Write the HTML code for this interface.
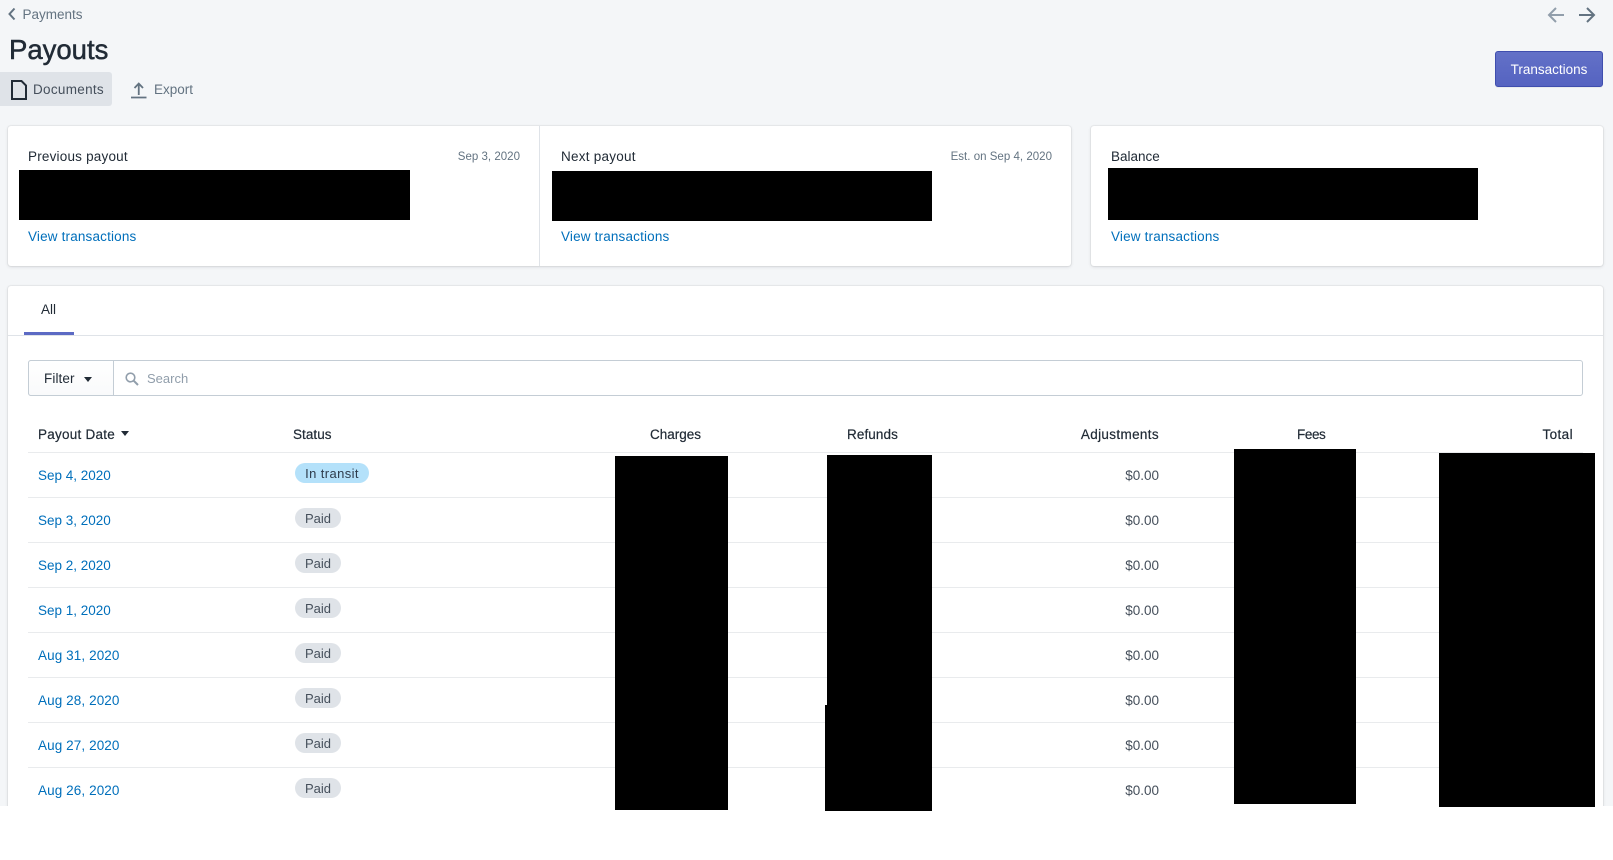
<!DOCTYPE html>
<html><head><meta charset="utf-8"><title>Payouts</title>
<style>
html,body{margin:0;padding:0;width:1613px;height:860px;overflow:hidden;background:#fff}
body{position:relative;font-family:"Liberation Sans",sans-serif;font-size:13.5px;color:#212b36}
#bg{position:absolute;left:0;top:0;width:1613px;height:806px;background:#f4f6f8}
.a{position:absolute}
.t{position:absolute;white-space:nowrap;line-height:20px}
.card{position:absolute;background:#fff;border-radius:3px;box-shadow:0 0 0 1px rgba(63,63,68,.05),0 1px 3px 0 rgba(63,63,68,.15)}
.k{position:absolute;background:#000}
.l{color:#006fbb}
.g{color:#637381}
.v{letter-spacing:.17px}
.s{font-size:11.5px;letter-spacing:.02px}
.h{-webkit-text-stroke:.2px #212b36}
.line{position:absolute;left:28px;width:1555px;height:1px;background:#e9ebed}
.pill{position:absolute;left:295px;width:46px;height:20px;border-radius:10px;background:#dfe3e8;color:#454f5b;line-height:21px;text-align:center;font-size:13px}
</style></head><body>
<div id="bg"></div>

<svg class="a" style="left:7px;top:7px" width="10" height="14" viewBox="0 0 10 14"><path d="M7.500 1.500 2.500 7l5 5.500" fill="none" stroke="#637381" stroke-width="2"/></svg>
<div class="t g" style="left:22.500px;top:5px">Payments</div>
<div class="t" style="left:9px;top:34px;font-size:27.500px;line-height:32px;-webkit-text-stroke:.5px #212b36">Payouts</div>

<div class="a" style="left:0;top:72px;width:112px;height:34px;background:#dfe3e8;border-radius:0 3px 3px 0"></div>
<svg class="a" style="left:10px;top:79px" width="18" height="22" viewBox="0 0 18 22"><path d="M2 2h9.500L16 6.500V20H2z" fill="none" stroke="#212b36" stroke-width="2"/></svg>
<div class="t" style="left:33px;top:80px;color:#454f5b;letter-spacing:.3px">Documents</div>
<svg class="a" style="left:130px;top:81px" width="18" height="18" viewBox="0 0 18 18"><path d="M1 16.500h15.500M8.750 14V3M4.500 7l4.250-4.500L13 7" fill="none" stroke="#637381" stroke-width="1.800"/></svg>
<div class="t g" style="left:154px;top:80px">Export</div>

<svg class="a" style="left:1547px;top:6px" width="18" height="18" viewBox="0 0 18 18"><path d="M17 9H2M9 2 2 9l7 7" fill="none" stroke="#919eab" stroke-width="2"/></svg>
<svg class="a" style="left:1578px;top:6px" width="18" height="18" viewBox="0 0 18 18"><path d="M1 9h15M9 2l7 7-7 7" fill="none" stroke="#637381" stroke-width="2"/></svg>

<div class="a" style="left:1495px;top:51px;width:106px;height:34px;border:1px solid #3f4eae;border-radius:3px;background:linear-gradient(#6371c7,#5563c1);color:#fff;line-height:36px;text-align:center;box-shadow:0 1px 0 rgba(22,29,37,.05)">Transactions</div>

<div class="card" style="left:8px;top:126px;width:1063px;height:140px"></div>
<div class="a" style="left:539px;top:126px;width:1px;height:140px;background:#dfe3e8"></div>
<div class="card" style="left:1091px;top:126px;width:512px;height:140px"></div>

<div class="t" style="left:28px;top:147px;letter-spacing:.2px">Previous payout</div>
<div class="t g s" style="right:1093px;top:147px">Sep 3, 2020</div>
<div class="k" style="left:19px;top:170px;width:391px;height:50px"></div>
<div class="t l v" style="left:28px;top:227px">View transactions</div>

<div class="t" style="left:561px;top:147px;letter-spacing:.25px">Next payout</div>
<div class="t g s" style="right:561px;top:147px">Est. on Sep 4, 2020</div>
<div class="k" style="left:552px;top:171px;width:380px;height:50px"></div>
<div class="t l v" style="left:561px;top:227px">View transactions</div>

<div class="t" style="left:1111px;top:147px">Balance</div>
<div class="k" style="left:1108px;top:168px;width:370px;height:52px"></div>
<div class="t l v" style="left:1111px;top:227px">View transactions</div>

<div class="card" style="left:8px;top:286px;width:1595px;height:540px;border-radius:3px 3px 0 0"></div>
<div class="a" style="left:0;top:806px;width:1613px;height:54px;background:#fff"></div>
<div class="t" style="left:41px;top:300px;color:#212b36">All</div>
<div class="a" style="left:8px;top:335px;width:1595px;height:1px;background:#dfe3e8"></div>
<div class="a" style="left:24px;top:332px;width:50px;height:3px;background:#5c6ac4"></div>

<div class="a" style="left:28px;top:360px;width:1553px;height:34px;border:1px solid #c4cdd5;border-radius:3px;background:#fff"></div>
<div class="a" style="left:28px;top:360px;width:84px;height:34px;border:1px solid #c4cdd5;border-radius:3px 0 0 3px;background:linear-gradient(#fff,#f9fafb)"></div>
<div class="t" style="left:44px;top:369px;color:#212b36;letter-spacing:.1px">Filter</div>
<div class="a" style="left:84px;top:377px;width:0;height:0;border:4.500px solid transparent;border-top:5px solid #212b36;border-bottom:0"></div>
<svg class="a" style="left:124px;top:371px" width="16" height="16" viewBox="0 0 16 16"><circle cx="6.500" cy="6.500" r="4.300" fill="none" stroke="#919eab" stroke-width="1.600"/><path d="M9.800 9.800 14 14" stroke="#919eab" stroke-width="2"/></svg>
<div class="t" style="left:147px;top:369px;color:#919eab;font-size:13px">Search</div>

<div class="t h" style="left:38px;top:425px;letter-spacing:.25px">Payout Date</div>
<div class="a" style="left:120.500px;top:431px;width:0;height:0;border:4.500px solid transparent;border-top:5.500px solid #212b36;border-bottom:0"></div>
<div class="t h" style="left:293px;top:425px;letter-spacing:.05px">Status</div>
<div class="t h" style="left:650px;top:425px">Charges</div>
<div class="t h" style="left:847px;top:425px;letter-spacing:.1px">Refunds</div>
<div class="t h" style="right:454px;top:425px;letter-spacing:.35px">Adjustments</div>
<div class="t h" style="left:1297px;top:425px;letter-spacing:-.4px">Fees</div>
<div class="t h" style="right:40px;top:425px;letter-spacing:.4px">Total</div>

<div class="line" style="top:452px"></div>
<div class="line" style="top:497px"></div>
<div class="line" style="top:542px"></div>
<div class="line" style="top:587px"></div>
<div class="line" style="top:632px"></div>
<div class="line" style="top:677px"></div>
<div class="line" style="top:722px"></div>
<div class="line" style="top:767px"></div>

<div class="t l" style="left:38px;top:466px">Sep 4, 2020</div>
<div class="t l" style="left:38px;top:511px">Sep 3, 2020</div>
<div class="t l" style="left:38px;top:556px">Sep 2, 2020</div>
<div class="t l" style="left:38px;top:601px">Sep 1, 2020</div>
<div class="t l" style="left:38px;top:646px;letter-spacing:.1px">Aug 31, 2020</div>
<div class="t l" style="left:38px;top:691px;letter-spacing:.1px">Aug 28, 2020</div>
<div class="t l" style="left:38px;top:736px;letter-spacing:.1px">Aug 27, 2020</div>
<div class="t l" style="left:38px;top:781px;letter-spacing:.1px">Aug 26, 2020</div>

<div class="pill" style="top:463px;width:74px;background:#b4e1fa;color:#2f3c4c;letter-spacing:.4px">In transit</div>
<div class="pill" style="top:508px">Paid</div>
<div class="pill" style="top:553px">Paid</div>
<div class="pill" style="top:598px">Paid</div>
<div class="pill" style="top:643px">Paid</div>
<div class="pill" style="top:688px">Paid</div>
<div class="pill" style="top:733px">Paid</div>
<div class="pill" style="top:778px">Paid</div>

<div class="t" style="right:454px;top:466px;color:#454f5b">$0.00</div>
<div class="t" style="right:454px;top:511px;color:#454f5b">$0.00</div>
<div class="t" style="right:454px;top:556px;color:#454f5b">$0.00</div>
<div class="t" style="right:454px;top:601px;color:#454f5b">$0.00</div>
<div class="t" style="right:454px;top:646px;color:#454f5b">$0.00</div>
<div class="t" style="right:454px;top:691px;color:#454f5b">$0.00</div>
<div class="t" style="right:454px;top:736px;color:#454f5b">$0.00</div>
<div class="t" style="right:454px;top:781px;color:#454f5b">$0.00</div>

<div class="k" style="left:615px;top:456px;width:113px;height:354px"></div>
<div class="k" style="left:827px;top:455px;width:105px;height:256px"></div>
<div class="k" style="left:825px;top:705px;width:107px;height:106px"></div>
<div class="k" style="left:1234px;top:449px;width:122px;height:355px"></div>
<div class="k" style="left:1439px;top:453px;width:156px;height:354px"></div>
</body></html>
